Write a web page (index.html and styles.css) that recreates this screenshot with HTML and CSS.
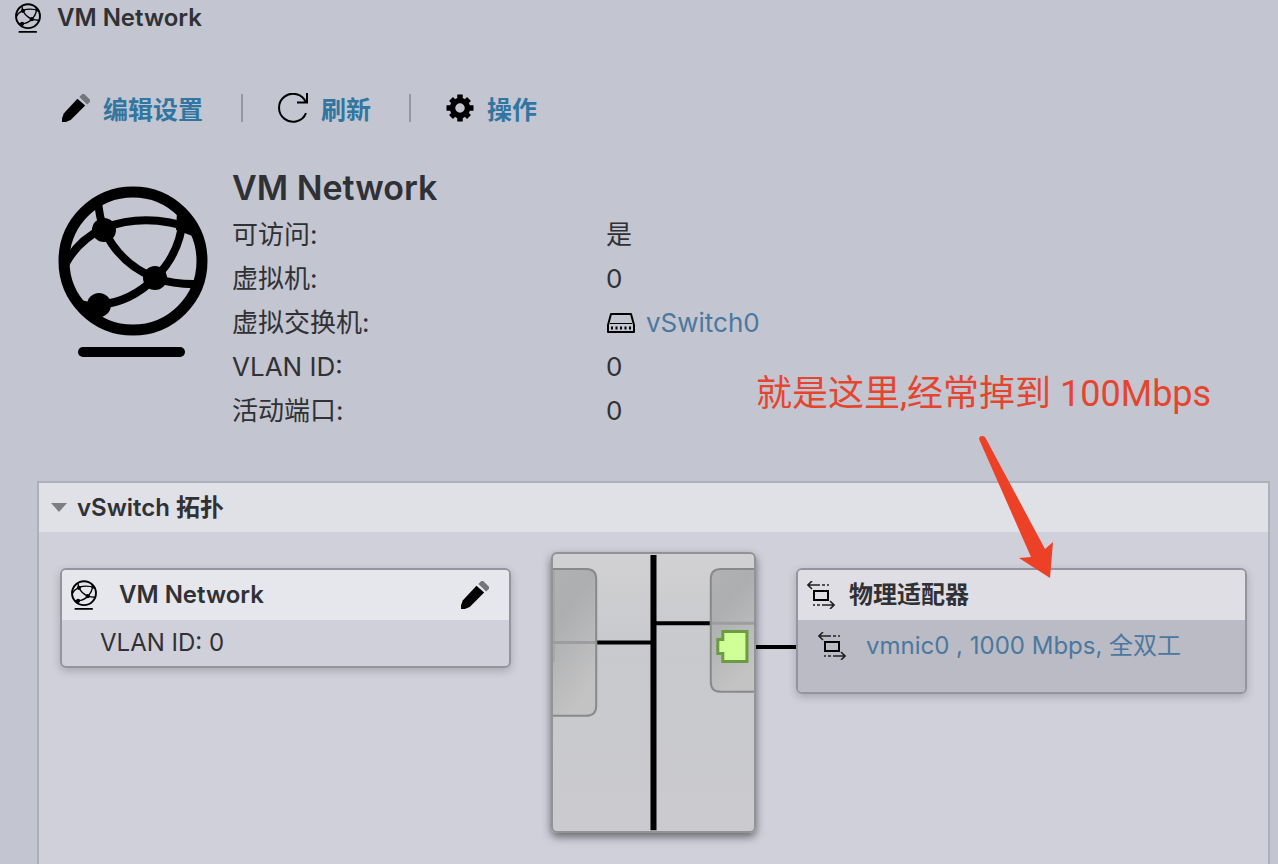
FILE: index.html
```
<!DOCTYPE html>
<html lang="zh-CN">
<head>
    <meta charset="UTF-8">
    <meta name="viewport" content="width=device-width, initial-scale=1.0">
    <title>VM Network</title>
    <link rel="stylesheet" href="styles.css">
</head>
<body>
    <svg class="symbols" aria-hidden="true">
        <symbol id="icon-network" viewBox="0 0 150 171">
            <circle cx="75" cy="75" r="69" fill="none" stroke="#000" stroke-width="11"/>
            <g fill="none" stroke="#000" stroke-width="8">
                <path d="M40 14Q41 30 46 44"/>
                <path d="M7 79Q20 54 46 42Q88 26 136 43"/>
                <path d="M46 44Q62 78 97 92Q118 99 142 98"/>
                <path d="M125 32Q122 68 97 92Q73 116 41 119L22 120"/>
            </g>
            <path d="M119 26L140 40V52L118 44ZM20 113L41 119L48 140Z"/>
            <circle cx="46" cy="44" r="12"/>
            <circle cx="97" cy="92" r="12"/>
            <circle cx="41" cy="119" r="12"/>
            <rect x="20" y="161" width="107" height="10" rx="5"/>
        </symbol>
        <symbol id="icon-pencil" viewBox="0 0 29 29">
            <path d="M0 29V25L2 20L16 5L24 12L9 27L4 29Z"/>
            <path d="M18 3L21 0H23L29 6V8L26 11Z" fill="#74757a"/>
        </symbol>
        <symbol id="icon-adapter" viewBox="0 0 28 28">
            <g fill="none" stroke="#222">
                <path d="M1 4H13M15 4H18M20 4H22M5 0L1 4L5 8" stroke-width="1.600"/>
                <path d="M27 24H15M13 24H10M8 24H6M23 20L27 24L23 28" stroke-width="1.600"/>
                <rect x="7" y="10" width="14" height="9" stroke="#000" stroke-width="2"/>
            </g>
        </symbol>
    </svg>

    <header class="topbar">
        <svg class="icon-small"><use href="#icon-network"/></svg>
        <span>VM Network</span>
    </header>

    <div class="toolbar">
        <button type="button">
            <svg class="icon-tool"><use href="#icon-pencil"/></svg>
            <span>编辑设置</span>
        </button>
        <button type="button">
            <svg class="icon-refresh" viewBox="0 0 30 30" fill="none" stroke="#000" stroke-width="2">
                <path d="M28 9.500A14 14 0 1 0 28 20"/>
                <path d="M29 0V9.500H19"/>
            </svg>
            <span>刷新</span>
        </button>
        <button type="button">
            <svg class="icon-tool" viewBox="-14 -14 28 28">
                <circle r="7.500" fill="none" stroke="#000" stroke-width="5.500"/>
                <g stroke="#000" stroke-width="5.500">
                    <path d="M0 -13.500V-8M0 8V13.500M-13.500 0H-8M8 0H13.500"/>
                    <path d="M-9 -9L-6 -6M6 6L9 9M-9 9L-6 6M6 -6L9 -9"/>
                </g>
            </svg>
            <span>操作</span>
        </button>
    </div>

    <section class="summary">
        <svg class="icon-large"><use href="#icon-network"/></svg>
        <div class="details">
            <h1>VM Network</h1>
            <dl>
                <dt>可访问:</dt>
                <dd>是</dd>
                <dt>虚拟机:</dt>
                <dd>0</dd>
                <dt>虚拟交换机:</dt>
                <dd>
                    <svg class="icon-switch" viewBox="0 0 30 22" fill="none" stroke="#000" stroke-width="2">
                        <path d="M5 2H25L28 13V20H2V13Z" stroke-linejoin="round"/>
                        <path d="M4 11.500H26" stroke-width="1"/>
                        <path d="M5 16H26" stroke-dasharray="2 2.500" stroke-width="3"/>
                    </svg>
                    <a href="#">vSwitch0</a>
                </dd>
                <dt>VLAN ID:</dt>
                <dd>0</dd>
                <dt>活动端口:</dt>
                <dd>0</dd>
            </dl>
        </div>
    </section>

    <section class="panel">
        <h2 class="panel-title">
            <svg class="caret" viewBox="0 0 16 10"><path d="M0 0H16L8 9Z" fill="#7d7e82"/></svg>
            vSwitch 拓扑
        </h2>
        <div class="topology">
            <div class="card">
                <div class="card-head">
                    <svg class="icon-small"><use href="#icon-network"/></svg>
                    <h3>VM Network</h3>
                    <button type="button" class="edit" aria-label="编辑设置">
                        <svg class="icon-tool"><use href="#icon-pencil"/></svg>
                    </button>
                </div>
                <div class="card-row">VLAN ID: 0</div>
            </div>

            <div class="switch">
                <svg viewBox="0 0 200 276">
                    <defs>
                        <linearGradient id="port" x1="0" y1="0" x2=".4" y2="1">
                            <stop offset="0" stop-color="#b2b2b4"/>
                            <stop offset=".35" stop-color="#adaeaf"/>
                            <stop offset="1" stop-color="#c3c3c4"/>
                        </linearGradient>
                    </defs>
                    <g fill="url(#port)" stroke="#88898b" stroke-width="2">
                        <path d="M-2 15H33Q43 15 43 25V151Q43 161 33 161H-2Z"/>
                        <path d="M202 15H167Q157 15 157 25V127Q157 137 167 137H202Z"/>
                    </g>
                    <g fill="none" stroke="#9d9d9f" stroke-width="3">
                        <path d="M0 88H42M158 69H200"/>
                        <path d="M1 16V108" stroke-width="1"/>
                    </g>
                    <g fill="none" stroke="#000">
                        <path d="M100 1V275" stroke-width="6"/>
                        <path d="M44 88H98M102 69H156" stroke-width="4"/>
                    </g>
                    <path d="M169 77H193V107H169V99H164V85H169Z" fill="#d0ff98" stroke="#6d9b42" stroke-width="3"/>
                </svg>
            </div>

            <div class="link-line"></div>

            <div class="card adapter">
                <div class="card-head">
                    <svg class="icon-adapter"><use href="#icon-adapter"/></svg>
                    <h3>物理适配器</h3>
                </div>
                <div class="card-row">
                    <svg class="icon-adapter"><use href="#icon-adapter"/></svg>
                    <a href="#">vmnic0 , 1000 Mbps, 全双工</a>
                </div>
            </div>
        </div>
    </section>

    <div class="note">
        <p>就是这里,经常掉到 100Mbps</p>
        <svg class="arrow" viewBox="0 0 76 144">
            <path d="M1 5Q2 0 7 3L67 115L75 108L72 144L41 124L53 123Z" fill="#ec4126"/>
        </svg>
    </div>
</body>
</html>
```
FILE: styles.css
```
* {
    box-sizing: border-box;
}

body {
    margin: 0;
    min-height: 100vh;
    display: flex;
    flex-direction: column;
    position: relative;
    background-color: #c3c5d0;
    color: #303135;
    font-family: Inter, "Noto Sans CJK SC", sans-serif;
    font-size: 24px;
    line-height: 36px;
}

h1, h2, h3, p, dl, dd {
    margin: 0;
}

a {
    color: #4a789e;
    text-decoration: none;
}

button {
    display: flex;
    align-items: center;
    padding: 0;
    border: none;
    background: none;
    font: inherit;
    cursor: pointer;
}

svg {
    flex: none;
    display: block;
}

.symbols {
    position: absolute;
    width: 0;
    height: 0;
}

.icon-small {
    width: 26px;
    height: 30px;
}

.icon-tool {
    width: 28px;
    height: 28px;
}

.icon-refresh {
    width: 30px;
    height: 30px;
}

.icon-large {
    width: 150px;
    height: 171px;
}

.icon-switch {
    width: 30px;
    height: 22px;
}

.icon-adapter {
    width: 28px;
    height: 28px;
}

.topbar {
    display: flex;
    align-items: center;
    gap: 16px;
    padding: 0 15px;
    font-weight: 600;
}

.toolbar {
    display: flex;
    align-items: center;
    padding: 54px 62px 0;
}

.toolbar button {
    gap: 13px;
    color: #3176a1;
    font-size: 25px;
    font-weight: bold;
}

.toolbar span {
    padding-top: 2px;
    margin-bottom: -2px;
}

.toolbar button + button::before {
    content: "";
    width: 2px;
    height: 28px;
    margin: 0 22px 0 38px;
    background-color: #9496a0;
}

.summary {
    display: flex;
    align-items: flex-start;
    gap: 24px;
    padding: 40px 58px 48px;
}

.summary .icon-large {
    margin-top: 20px;
}

.details {
    flex: 1;
}

.details h1 {
    margin-bottom: 3px;
    font-size: 34px;
    font-weight: 600;
    line-height: 44px;
}

.details dl {
    display: grid;
    grid-template-columns: 374px 1fr;
    font-size: 26px;
    line-height: 44px;
}

.details dd {
    display: flex;
    align-items: center;
    gap: 10px;
}

.panel {
    flex: 1;
    margin: 0 8px 0 37px;
    border: 2px solid #adafba;
    border-bottom: none;
    background-color: #d0d0db;
}

.panel-title {
    display: flex;
    align-items: center;
    gap: 10px;
    height: 49px;
    padding-left: 12px;
    background-color: #e0e1e7;
    font-size: 24px;
    font-weight: 600;
}

.caret {
    width: 16px;
    height: 10px;
}

.topology {
    display: grid;
    grid-template-columns: 1fr 40px 205px 40px 1fr;
    align-items: start;
    padding: 20px 21px 30px;
}

.card {
    margin-top: 16px;
    border: 2px solid #93949e;
    border-radius: 6px;
    box-shadow: 0 3px 8px rgba(0, 0, 0, 0.2);
    overflow: hidden;
}

.card-head {
    display: flex;
    align-items: center;
    height: 50px;
    padding: 0 20px 0 9px;
    background-color: #e6e7ec;
}

.card-head h3 {
    flex: 1;
    margin-left: 22px;
    font-size: 24px;
    font-weight: 600;
}

.card-row {
    display: flex;
    align-items: center;
    height: 46px;
    padding: 0 38px;
}

.adapter .card-head {
    background-color: #dedee4;
}

.adapter h3 {
    margin-left: 14px;
}

.adapter .card-row {
    align-items: flex-start;
    gap: 20px;
    height: 72px;
    padding: 8px 20px;
    background-color: #babbc5;
}

.adapter .card-row svg {
    margin-top: 4px;
}

.switch {
    grid-column: 3;
    border: 2px solid #929397;
    border-radius: 6px;
    background: linear-gradient(#d1d1d3, #c8c9cd 35%, #cbcbcf);
    box-shadow: 0 4px 9px rgba(0, 0, 0, 0.5);
    overflow: hidden;
}

.link-line {
    height: 4px;
    margin-top: 93px;
    background-color: #000;
}

/* red remark drawn over the page */
.note {
    position: absolute;
    top: 367px;
    left: 756px;
    color: #e5452f;
    font-family: Roboto, "Noto Sans CJK SC", sans-serif;
    font-size: 36px;
    line-height: 54px;
    white-space: nowrap;
}

.arrow {
    width: 76px;
    height: 144px;
    margin: 13px 0 0 222px;
}
```
